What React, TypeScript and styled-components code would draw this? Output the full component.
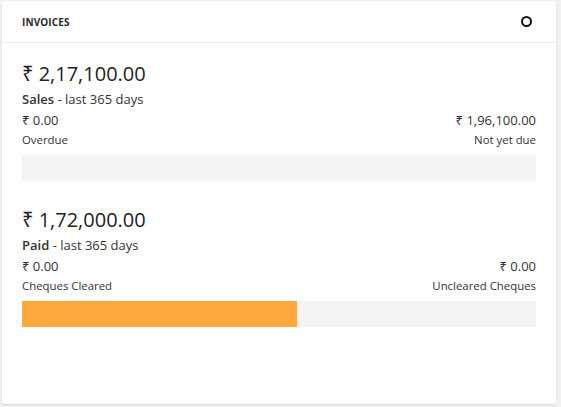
import styled, { createGlobalStyle } from 'styled-components';

const GlobalStyle = createGlobalStyle`
  html, body {
    margin: 0;
    padding: 0;
    background: #f1f1f1;
  }
  body {
    font-family: 'Open Sans', 'Noto Sans', 'DejaVu Sans', sans-serif;
    color: #333;
  }
`;

const Page = styled.div`
  padding: 1px 5px 3px 2px;
`;

const Card = styled.div`
  background: #fff;
  border-radius: 3px;
  box-shadow: 0 1px 2px rgba(0, 0, 0, 0.12);
  height: 403px;
  box-sizing: border-box;
`;

const Header = styled.div`
  height: 41px;
  display: flex;
  align-items: center;
  justify-content: space-between;
  padding: 0 24px 0 20px;
  border-bottom: 1px solid #ececec;
`;

const Title = styled.h4`
  margin: 0;
  font-size: 10px;
  font-weight: 700;
  letter-spacing: 0.1px;
  color: #2a2a2a;
`;

const Ring = styled.span`
  width: 7px;
  height: 7px;
  border: 2px solid #111;
  border-radius: 50%;
`;

const Body = styled.div`
  padding: 16px 20px 0 20px;
  display: flex;
  flex-direction: column;
  gap: 24px;
`;

const Block = styled.section`
  display: flex;
  flex-direction: column;
`;

const Amount = styled.div`
  font-size: 20px;
  line-height: 30px;
  color: #222;
`;

const Caption = styled.div`
  font-size: 13px;
  line-height: 20px;
  color: #333;
  b {
    font-weight: 600;
  }
`;

const Row = styled.div`
  display: flex;
  justify-content: space-between;
`;

const Cell = styled.div<{ right?: boolean }>`
  display: flex;
  flex-direction: column;
  align-items: ${(p) => (p.right ? 'flex-end' : 'flex-start')};
`;

const Value = styled.div`
  font-size: 13px;
  line-height: 20px;
  margin-top: 1px;
`;

const Label = styled.div`
  font-size: 11.4px;
  line-height: 19px;
`;

const Track = styled.div`
  margin-top: 6px;
  height: 26px;
  background: #f3f3f3;
  display: flex;
`;

const Fill = styled.div`
  background: #fea93c;
  height: 100%;
`;

type Summary = {
  total: string;
  name: string;
  leftValue: string;
  leftLabel: string;
  rightValue: string;
  rightLabel: string;
  pct: number;
};

const data: Summary[] = [
  {
    total: '₹ 2,17,100.00',
    name: 'Sales',
    leftValue: '₹ 0.00',
    leftLabel: 'Overdue',
    rightValue: '₹ 1,96,100.00',
    rightLabel: 'Not yet due',
    pct: 0,
  },
  {
    total: '₹ 1,72,000.00',
    name: 'Paid',
    leftValue: '₹ 0.00',
    leftLabel: 'Cheques Cleared',
    rightValue: '₹ 0.00',
    rightLabel: 'Uncleared Cheques',
    pct: 53.5,
  },
];

export default function App() {
  return (
    <>
      <GlobalStyle />
      <Page>
        <Card>
          <Header>
            <Title>INVOICES</Title>
            <Ring />
          </Header>
          <Body>
            {data.map((d) => (
              <Block key={d.name}>
                <Amount>{d.total}</Amount>
                <Caption>
                  <b>{d.name}</b> - last 365 days
                </Caption>
                <Row>
                  <Cell>
                    <Value>{d.leftValue}</Value>
                    <Label>{d.leftLabel}</Label>
                  </Cell>
                  <Cell right>
                    <Value>{d.rightValue}</Value>
                    <Label>{d.rightLabel}</Label>
                  </Cell>
                </Row>
                <Track>
                  <Fill style={{ width: `${d.pct}%` }} />
                </Track>
              </Block>
            ))}
          </Body>
        </Card>
      </Page>
    </>
  );
}
